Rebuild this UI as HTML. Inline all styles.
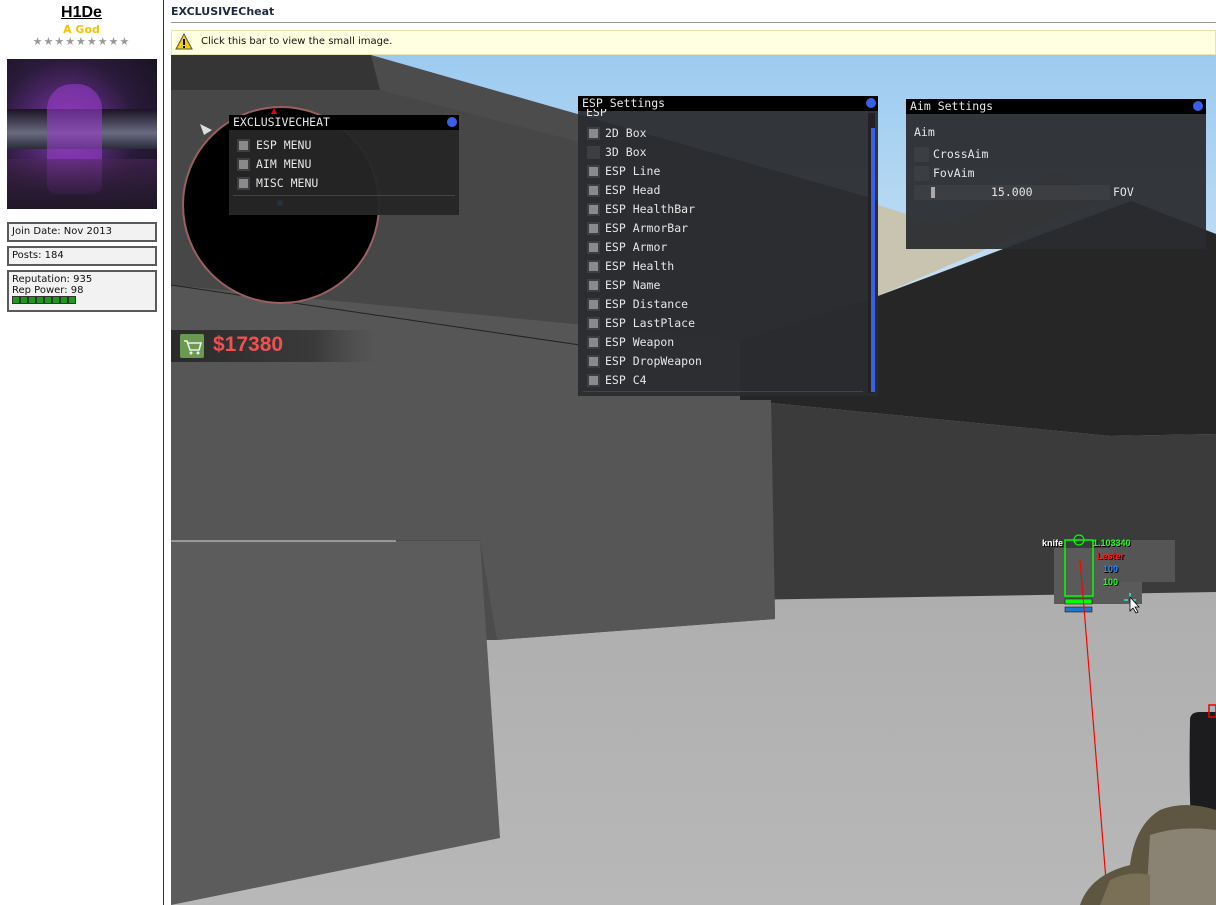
<!DOCTYPE html>
<html><head><meta charset="utf-8"><style>
*{margin:0;padding:0;box-sizing:border-box}
body{width:1216px;height:905px;overflow:hidden;background:#fff;position:relative;font-family:"DejaVu Sans","Liberation Sans",sans-serif}
.abs{position:absolute}
.sb{position:absolute;left:7px;width:150px;border:2px solid #5a5a5a;background:#f2f2f2;font-size:10px;color:#111;padding:2px 3px;line-height:12px}
.mono{font-family:"DejaVu Sans Mono","Liberation Mono",monospace;font-size:11.5px;color:#e6e6e6;white-space:pre}
.panel{position:absolute;background:rgba(42,44,47,0.94)}
.hdr{position:absolute;left:0;right:0;top:0;height:15px;background:#000}
.dot{position:absolute;width:10px;height:10px;border-radius:50%;background:#3a5fe8;top:2px}
.cb{position:absolute;width:13px;height:13px;background:#3c3e42}
.cb i{position:absolute;left:2px;top:2px;width:9px;height:9px;background:#8a8a8a}
</style></head><body>
<div class="abs" style="left:163px;top:0;width:1px;height:905px;background:#333"></div>
<div class="abs" style="left:0;top:4px;width:163px;text-align:center;font-size:16px;font-weight:bold;text-decoration:underline;color:#000;font-family:'Liberation Sans',sans-serif">H1De</div>
<div class="abs" style="left:0;top:23px;width:163px;text-align:center;font-size:11px;font-weight:bold;color:#f5c400">A God</div>
<div class="abs" style="left:0;top:35px;width:163px;text-align:center;font-size:11px;color:#999;letter-spacing:1px">★★★★★★★★★</div>
<div class="abs" style="left:7px;top:59px;width:150px;height:150px;background:radial-gradient(circle at 60px 70px,#8a3ab0 0,#5a2a7a 30px,#2a1a3a 70px,#1a1424 110px)">
<div class="abs" style="left:0;top:50px;width:150px;height:40px;background:linear-gradient(#1a1424,#6a6a80 60%,#2a2a3a)"></div>
<div class="abs" style="left:40px;top:25px;width:55px;height:110px;border-radius:25px 25px 10px 10px;background:rgba(150,60,200,0.6)"></div>
<div class="abs" style="left:0;top:100px;width:150px;height:50px;background:linear-gradient(rgba(80,40,90,.5),#201828)"></div>
</div>
<div class="sb" style="top:222px;height:20px">Join Date: Nov 2013</div>
<div class="sb" style="top:246px;height:20px">Posts: 184</div>
<div class="sb" style="top:270px;height:42px;line-height:11px">Reputation: 935<br>Rep Power: 98<br><span style="display:inline-block;width:64px;height:8px;background:repeating-linear-gradient(90deg,#1a9a1a 0 6px,#333 6px 8px);border:1px solid #333"></span></div>
<div class="abs" style="left:171px;top:5px;font-size:11px;font-weight:bold;color:#1a2a40">EXCLUSIVECheat</div>
<div class="abs" style="left:171px;top:22px;width:1045px;height:1px;background:#999"></div>
<div class="abs" style="left:171px;top:30px;width:1045px;height:25px;background:#ffffe1;border:1px solid #e8e4b0"></div>
<svg class="abs" style="left:175px;top:33px" width="18" height="18"><path d="M9 1 L17 16 L1 16 Z" fill="#f5d000" stroke="#555" stroke-width="1"/><rect x="8" y="6" width="2" height="6" fill="#000"/><rect x="8" y="13" width="2" height="2" fill="#000"/></svg>
<div class="abs" style="left:201px;top:36px;font-size:10px;color:#111">Click this bar to view the small image.</div>
<svg class="abs" style="left:0;top:0" width="1216" height="905">
<defs>
<linearGradient id="sky" x1="0" y1="0" x2="0" y2="1"><stop offset="0" stop-color="#9ccbf0"/><stop offset="1" stop-color="#c6e0f4"/></linearGradient>
<linearGradient id="floor" x1="0" y1="0" x2="0" y2="1"><stop offset="0" stop-color="#9e9e9e"/><stop offset=".4" stop-color="#a8a8a8"/><stop offset="1" stop-color="#b8b8b8"/></linearGradient>
<linearGradient id="money" x1="0" y1="0" x2="1" y2="0"><stop offset="0" stop-color="#2a2a2a"/><stop offset=".7" stop-color="#333" stop-opacity=".8"/><stop offset="1" stop-color="#444" stop-opacity="0"/></linearGradient>
</defs>
<rect x="171" y="55" width="1045" height="850" fill="url(#floor)"/>
<polygon points="371,55 1216,55 1216,234 1131,201 878,296 878,200" fill="url(#sky)"/>
<polygon points="878,205 940,225 1060,170 1100,200 878,296" fill="#c9c4b0"/>
<polygon points="740,340 878,296 1131,201 1216,234 1216,434 1110,436 740,400" fill="#262626"/>
<polygon points="740,400 1110,436 1216,434 1216,592 740,600" fill="#3b3b3b"/>
<polygon points="171,55 371,55 878,200 878,296 740,340 740,400 771,400 775,619 497,640 171,640" fill="#4c4c4c"/>
<polygon points="171,55 371,55 380,90 171,90" fill="#353535"/>
<polygon points="171,90 380,90 878,220 878,296 740,340 171,285" fill="#474747"/>
<polygon points="171,285 740,340 740,400 771,400 775,619 497,640 480,540 171,540" fill="#565656"/>
<line x1="171" y1="285" x2="580" y2="345" stroke="#222" stroke-width="1"/>
<polygon points="171,541 480,541 500,838 171,905" fill="#5c5c5c"/>
<line x1="171" y1="541" x2="396" y2="541" stroke="#ddd" stroke-width="1"/>
<circle cx="281" cy="205" r="98" fill="#000" stroke="#9a6060" stroke-width="2"/>
<polygon points="200,124 212,130 204,135" fill="#ddd"/>
<polygon points="274,108 277,114 271,114" fill="#e00"/>
<rect x="171" y="330" width="205" height="32" fill="url(#money)"/>
<rect x="180" y="334" width="24" height="24" rx="2" fill="#6a9a50"/>
<path d="M184 341 h3 l3 9 h9 l2 -7 h-13" stroke="#eee" stroke-width="1.6" fill="none"/>
<circle cx="191" cy="353" r="1.5" fill="#eee"/><circle cx="198" cy="353" r="1.5" fill="#eee"/>
<rect x="1054" y="548" width="88" height="56" fill="#5a5a5a"/>
<rect x="1110" y="540" width="65" height="42" fill="#555"/>
<rect x="1065" y="540" width="28" height="56" fill="none" stroke="#0f0" stroke-width="1.5"/>
<circle cx="1079" cy="540" r="5" fill="none" stroke="#0f0" stroke-width="1.2"/>
<rect x="1065" y="599" width="27" height="5" fill="#0f0" stroke="#000" stroke-width=".5"/>
<rect x="1065" y="607" width="27" height="5" fill="#1a78d0" stroke="#000" stroke-width=".5"/>
<polyline points="1080,560 1085,620 1108,905" stroke="#f00" stroke-width="1.2" fill="none"/>
<path d="M1130 593 v5 M1130 603 v2 M1124 600 h4 M1132 600 h4" stroke="#2ee" stroke-width="1.5"/>
<path d="M1130 597 v14 l3 -3 l3 5 l2 -1 l-3 -5 h4 z" fill="#fff" stroke="#000" stroke-width=".8"/>
<path d="M1190 720 q0 -8 10 -8 h16 v160 h-20 q-8 -40 -6 -152z" fill="#1c1c1e"/>
<rect x="1209" y="705" width="7" height="12" fill="none" stroke="#e00" stroke-width="1.5"/>
<path d="M1080 905 q10 -30 50 -40 q5 -40 30 -55 q25 -10 56 0 v95z" fill="#5e5640"/>
<path d="M1150 835 q30 -10 66 -5 v75 h-70z" fill="#8a8272"/>
<path d="M1110 880 q20 -10 40 -5 v30 h-50z" fill="#7a7058"/>
</svg>
<div class="abs" style="left:1042px;top:538px;font:bold 9px 'Liberation Sans',sans-serif;color:#fff;text-shadow:1px 1px 0 #000">knife</div>
<div class="abs" style="left:1093px;top:538px;font:bold 9px 'Liberation Sans',sans-serif;color:#2f2;text-shadow:1px 1px 0 #000">1.103340</div>
<div class="abs" style="left:1097px;top:551px;font:bold 9px 'Liberation Sans',sans-serif;color:#f11;text-shadow:1px 1px 0 #000">Lester</div>
<div class="abs" style="left:1103px;top:564px;font:bold 9px 'Liberation Sans',sans-serif;color:#28f;text-shadow:1px 1px 0 #000">100</div>
<div class="abs" style="left:1103px;top:577px;font:bold 9px 'Liberation Sans',sans-serif;color:#2f2;text-shadow:1px 1px 0 #000">100</div>
<div class="abs" style="left:213px;top:333px;font:bold 21px 'Liberation Sans',sans-serif;color:#f05050">$17380</div>
<div class="panel" style="left:229px;top:115px;width:230px;height:100px;background:rgba(38,38,38,.95)">
<div class="hdr"></div><div class="mono abs" style="left:4px;top:0px">EXCLUSIVECHEAT</div><div class="dot" style="left:218px"></div>
<div class="cb" style="left:8px;top:24px"><i></i></div><div class="mono abs" style="left:27px;top:23px">ESP MENU</div>
<div class="cb" style="left:8px;top:43px"><i></i></div><div class="mono abs" style="left:27px;top:42px">AIM MENU</div>
<div class="cb" style="left:8px;top:62px"><i></i></div><div class="mono abs" style="left:27px;top:61px">MISC MENU</div>
<div class="abs" style="left:4px;top:80px;width:222px;height:1px;background:#444"></div>
<div class="abs" style="left:48px;top:85px;width:6px;height:6px;border-radius:50%;background:#25333a"></div>
</div>
<div class="panel" style="left:578px;top:96px;width:300px;height:300px">
<div class="hdr"></div><div class="mono abs" style="left:4px;top:0">ESP Settings</div><div class="dot" style="left:288px;top:2px"></div>
<div class="mono abs" style="left:8px;top:13px;height:7px;overflow:hidden;line-height:6px">ESP</div>
<div class="abs" style="left:290px;top:17px;width:7px;height:280px;background:#222"></div>
<div class="abs" style="left:293px;top:32px;width:4px;height:264px;background:#3a5fe8"></div>
<div class="abs" style="left:5px;top:295px;width:280px;height:1px;background:#444"></div>
</div>
<div class="panel" style="left:906px;top:99px;width:300px;height:150px">
<div class="hdr"></div><div class="mono abs" style="left:4px;top:0">Aim Settings</div><div class="dot" style="left:287px"></div>
<div class="mono abs" style="left:8px;top:26px">Aim</div>
<div class="cb" style="left:8px;top:48px;width:15px;height:15px"></div><div class="mono abs" style="left:27px;top:48px">CrossAim</div>
<div class="cb" style="left:8px;top:67px;width:15px;height:15px"></div><div class="mono abs" style="left:27px;top:67px">FovAim</div>
<div class="abs" style="left:8px;top:86px;width:196px;height:15px;background:#3c3e42"></div>
<div class="abs" style="left:25px;top:88px;width:4px;height:11px;background:#aaa"></div>
<div class="mono abs" style="left:85px;top:86px">15.000</div>
<div class="mono abs" style="left:207px;top:86px">FOV</div>
</div>
<div class="abs" style="left:578px;top:0">
<div class="cb" style="left:9px;top:127px"><i></i></div><div class="mono abs" style="left:27px;top:126px">2D Box</div>
<div class="cb" style="left:9px;top:146px"></div><div class="mono abs" style="left:27px;top:145px">3D Box</div>
<div class="cb" style="left:9px;top:165px"><i></i></div><div class="mono abs" style="left:27px;top:164px">ESP Line</div>
<div class="cb" style="left:9px;top:184px"><i></i></div><div class="mono abs" style="left:27px;top:183px">ESP Head</div>
<div class="cb" style="left:9px;top:203px"><i></i></div><div class="mono abs" style="left:27px;top:202px">ESP HealthBar</div>
<div class="cb" style="left:9px;top:222px"><i></i></div><div class="mono abs" style="left:27px;top:221px">ESP ArmorBar</div>
<div class="cb" style="left:9px;top:241px"><i></i></div><div class="mono abs" style="left:27px;top:240px">ESP Armor</div>
<div class="cb" style="left:9px;top:260px"><i></i></div><div class="mono abs" style="left:27px;top:259px">ESP Health</div>
<div class="cb" style="left:9px;top:279px"><i></i></div><div class="mono abs" style="left:27px;top:278px">ESP Name</div>
<div class="cb" style="left:9px;top:298px"><i></i></div><div class="mono abs" style="left:27px;top:297px">ESP Distance</div>
<div class="cb" style="left:9px;top:317px"><i></i></div><div class="mono abs" style="left:27px;top:316px">ESP LastPlace</div>
<div class="cb" style="left:9px;top:336px"><i></i></div><div class="mono abs" style="left:27px;top:335px">ESP Weapon</div>
<div class="cb" style="left:9px;top:355px"><i></i></div><div class="mono abs" style="left:27px;top:354px">ESP DropWeapon</div>
<div class="cb" style="left:9px;top:374px"><i></i></div><div class="mono abs" style="left:27px;top:373px">ESP C4</div>
</div>
</body></html>
